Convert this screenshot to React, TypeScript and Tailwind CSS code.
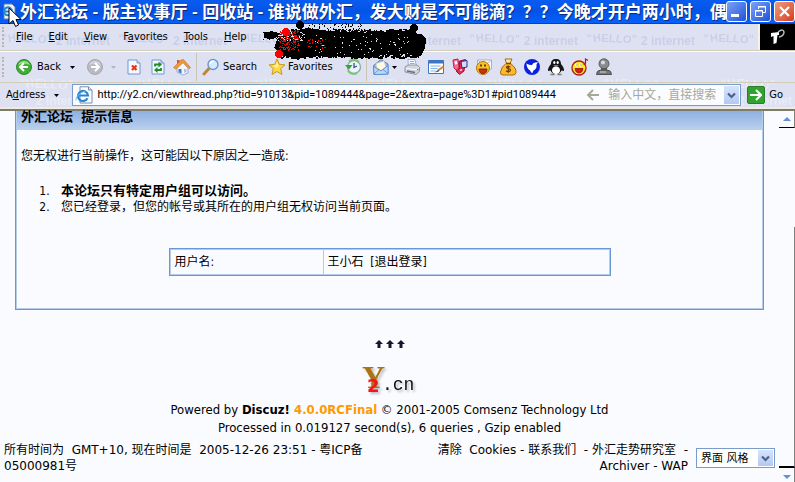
import type { ReactNode } from "react";

const menuItems = [
  { before: "", key: "F", after: "ile" },
  { before: "", key: "E", after: "dit" },
  { before: "", key: "V", after: "iew" },
  { before: "F", key: "a", after: "vorites" },
  { before: "", key: "T", after: "ools" },
  { before: "", key: "H", after: "elp" },
];

/* ---------- Icons ---------- */

function Icon({ children }: { children: ReactNode }) {
  return (
    <svg width="18" height="18" viewBox="0 0 18 18" className="shrink-0" aria-hidden="true">
      {children}
    </svg>
  );
}

function Caret({ muted = false }: { muted?: boolean }) {
  return (
    <svg width="5" height="3" viewBox="0 0 5 3" className="shrink-0" aria-hidden="true">
      <path d="M0 0h5L2.5 3z" fill={muted ? "#b4b6c4" : "#000"} />
    </svg>
  );
}

const BackIcon = () => (
  <Icon>
    <circle cx="9" cy="9" r="7.5" fill="#3fae35" stroke="#2d8a2a" />
    <path d="M3 7a6.5 6.5 0 0 1 12 0q-6-3-12 0z" fill="#9ada8b" />
    <path d="M13 9H5.5M9 5L5 9l4 4" fill="none" stroke="#fff" strokeWidth="2" />
  </Icon>
);

const ForwardIcon = () => (
  <Icon>
    <circle cx="9" cy="9" r="7.5" fill="#b9bac2" stroke="#a5a7b0" />
    <path d="M3 7a6.5 6.5 0 0 1 12 0q-6-3-12 0z" fill="#d4d5dc" />
    <path d="M5 9h7.5M9 5l4 4-4 4" fill="none" stroke="#fff" strokeWidth="2" />
  </Icon>
);

const StopIcon = () => (
  <Icon>
    <path d="M3 2h9l3 3v11H3z" fill="#f4f8ff" stroke="#6f97d6" />
    <path d="M12 2v3h3" fill="#cfe0fa" stroke="#6f97d6" />
    <path d="M7 7.5l4.5 4.5M11.5 7.5L7 12" stroke="#e2371c" strokeWidth="2.2" />
  </Icon>
);

const RefreshIcon = () => (
  <Icon>
    <path d="M3 2h9l3 3v11H3z" fill="#f4f8ff" stroke="#6f97d6" />
    <path d="M12 2v3h3" fill="#cfe0fa" stroke="#6f97d6" />
    <path d="M6 8.5v-2h4" fill="none" stroke="#1e8e2a" strokeWidth="1.8" />
    <path d="M9.5 3.5l3.5 3-3.5 3zM8.5 9L5 12l3.5 3z" fill="#1e8e2a" />
    <path d="M12 10v2H8" fill="none" stroke="#1e8e2a" strokeWidth="1.8" />
  </Icon>
);

const HomeIcon = () => (
  <Icon>
    <path d="M4 9l6-5 5 6v5l-5 2-6-3z" fill="#f3f5fc" stroke="#8c9cc4" strokeWidth=".8" />
    <path d="M4 2h2.5v5H4z" fill="#d5542f" />
    <path d="M.5 9.5L8 2l2.5-.5 7 8-1.5 1.2-6-6-7 6.5z" fill="#ee9a37" stroke="#bd6f26" strokeWidth=".6" />
    <path d="M5.5 11h3v4.5l-3-1.2z" fill="#4479cc" />
    <path d="M11 11h2.5v3L11 15z" fill="#a9c3ef" />
  </Icon>
);

const SearchIcon = () => (
  <Icon>
    <path d="M2 16l5-5.5" stroke="#c5872e" strokeWidth="3" strokeLinecap="round" />
    <circle cx="11" cy="6.5" r="5" fill="#d2ebff" stroke="#6d96cf" strokeWidth="1.4" />
    <path d="M8 6a3 3 0 0 1 4-2.5" fill="none" stroke="#fff" strokeWidth="1.6" />
  </Icon>
);

const StarIcon = () => (
  <Icon>
    <path d="M9 1l2.3 5.3 5.7.6-4.3 3.8 1.3 5.8-5-3-5 3 1.3-5.8L1 6.9l5.7-.6z" fill="#fcd949" stroke="#c99a1c" />
    <path d="M9 3.5l1.5 4L9 10 5 7.8l3-.5z" fill="#fff2a8" />
  </Icon>
);

const HistoryIcon = () => (
  <Icon>
    <circle cx="10" cy="9" r="6.5" fill="#e9f4fb" stroke="#8fae9e" strokeWidth="1.4" />
    <path d="M5 3.5a7 7 0 0 1 10 .5M4 13a7 7 0 0 0 9 2" fill="none" stroke="#7fc277" strokeWidth="2" />
    <path d="M1 7h7.5L5 11.5z" fill="#36a234" />
    <path d="M10 5v4.5L13 8" fill="none" stroke="#31538c" strokeWidth="1.3" />
  </Icon>
);

const MailIcon = () => (
  <Icon>
    <path d="M1.5 7.5L9 1.5 16 6v10l-14 .5z" fill="#8ab8ee" stroke="#5787c9" />
    <path d="M4 5.5L12 3l2 6-5 3.5-4.5-3z" fill="#fff9e6" stroke="#d8c795" strokeWidth=".8" />
    <path d="M1.5 8.5L9 13l7-5.5V16l-14 .5z" fill="#b8dafa" stroke="#5787c9" strokeWidth=".8" />
    <path d="M2 16l5-4.5M16 15.5l-5-4" stroke="#5787c9" strokeWidth=".8" />
  </Icon>
);

const PrintIcon = () => (
  <Icon>
    <path d="M5 1.5h7l1.5 7h-8z" fill="#f6faff" stroke="#7aa5d8" strokeWidth=".8" />
    <path d="M7 3.5h4M7 5.5h4.5" stroke="#87b1e2" />
    <path d="M2 9l3-2h9l2.5 2v4.5l-3.5 3L2 14z" fill="#d3d5dc" stroke="#8b8e9a" strokeWidth=".9" />
    <path d="M3 10.5l10 1 3-2" fill="none" stroke="#fff" />
    <path d="M4 13l8 1.5" stroke="#686e80" strokeWidth="1.4" />
    <path d="M14 11.5h1.5" stroke="#5aa84e" strokeWidth="1.5" />
  </Icon>
);

const EditIcon = () => (
  <Icon>
    <path d="M1.5 2.5h15v13h-15z" fill="#fff" stroke="#3d76c2" />
    <path d="M1.5 2.5h15v3h-15z" fill="#3d76c2" />
    <path d="M3.5 8h10M3.5 10.5h7M3.5 13h5" stroke="#86b3e8" />
    <path d="M16.5 8.5l-5.5 4" stroke="#d9822b" strokeWidth="2" />
    <path d="M11.5 11.5l-4 3 4.5-1z" fill="#2e5dab" />
  </Icon>
);

const PhoneIcon = () => (
  <Icon>
    <path d="M2 2l5-1 1 9-3 2-2-2z" fill="#f07098" stroke="#c31c46" />
    <path d="M3.5 3.5L6 3l.5 3-2.5.5z" fill="#fff" />
    <path d="M8.5 3l6-1.5L13 13l-4.5 3.5L5 13l3.5-2z" fill="#e52b50" stroke="#a90f31" />
    <path d="M10 3.5l6-1V9l-5 1z" fill="#cfe0ff" stroke="#1d328f" />
    <path d="M9 12.5l2-1" stroke="#ffd1dc" strokeWidth="1.4" />
  </Icon>
);

const MessengerIcon = () => (
  <Icon>
    <path d="M2.5 2h14v9h-14z" fill="#fff" stroke="#9ba0ae" strokeWidth=".8" />
    <path d="M3 2.5l6.5 5 6.5-5" fill="none" stroke="#b3b6c2" />
    <circle cx="8" cy="10" r="6.5" fill="#fbc02a" stroke="#b37508" />
    <path d="M4 11h8q-.5 4.5-4 4.5T4 11z" fill="#d12f12" stroke="#5a1a02" strokeWidth=".8" />
    <path d="M6 6.5v2M10 6.5v2" stroke="#3f2400" strokeWidth="1.6" />
  </Icon>
);

const MoneyIcon = () => (
  <Icon>
    <path d="M6 1h7l-2 4.5H7.5z" fill="#ffe9a4" stroke="#a56f09" />
    <path d="M7 5.5h4.5q6 4.5 5.5 9-.5 2.5-3 2.5H4q-3 0-2.5-3 1-5.500 5.500-8.500z" fill="#ffb92e" stroke="#a56f09" />
    <path d="M7 5.5h5" stroke="#7d4a02" strokeWidth="1.6" />
    <path d="M11.5 9q-4-1.5-4 .5c0 1.5 4 .8 4 2.5s-3 2-4.5.8M9.3 7.5V15" fill="none" stroke="#6f3c00" strokeWidth="1.2" />
  </Icon>
);

const BirdIcon = () => (
  <Icon>
    <circle cx="9" cy="9" r="8" fill="#0a20e0" />
    <path d="M3.5 5.5Q7 7.5 9 7q1-3 4-2.5l2-.5-1.5 2.5q.5 4.5-3 6L9 15.5l-2-3q-3.5-2.5-3.5-7z" fill="#fff" />
  </Icon>
);

const PenguinIcon = () => (
  <Icon>
    <path d="M9 1c3.5 0 5 2 5 5 1.5 2 3.5 4.5 3 7l-2.5-.5Q13 16 9 16t-5.5-3.5L1 13c-.5-2.5 1.5-5 3-7 0-3 1.5-5 5-5z" fill="#161616" />
    <path d="M9 8.5c3 0 4 2 4 4S11 16 9 16s-4-1.5-4-3.5 1-4 4-4z" fill="#fff" />
    <ellipse cx="7.3" cy="4.5" rx="1.1" ry="1.5" fill="#fff" />
    <ellipse cx="10.7" cy="4.5" rx="1.1" ry="1.5" fill="#fff" />
    <path d="M6 7.3h6L9 8.6z" fill="#aaa" />
    <path d="M3.5 16.5h4M10.5 16.5h4" stroke="#777" strokeWidth="1.6" />
  </Icon>
);

const SmileIcon = () => (
  <Icon>
    <circle cx="8" cy="10" r="7" fill="#ffe81a" stroke="#a81a20" strokeWidth="1.3" />
    <circle cx="5.5" cy="7" r="1.5" fill="#fff" />
    <circle cx="9.5" cy="7" r="1.5" fill="#fff" />
    <path d="M5.5 7h1M9.5 7h1" stroke="#333" />
    <path d="M4 10.5h8q-.5 4.5-4 4.5t-4-4.5z" fill="#d61b1b" stroke="#7e0909" strokeWidth=".7" />
    <path d="M14.5 6V1L17 2.5" fill="none" stroke="#a81a20" strokeWidth="1.2" />
    <circle cx="13.7" cy="6" r="1.3" fill="#d61b1b" />
  </Icon>
);

const PawnIcon = () => (
  <Icon>
    <path d="M1.5 16.5q0-4 4-4.5h7q4 .5 4 4.5z" fill="#777" stroke="#3b3b3b" strokeWidth=".8" />
    <path d="M6 9h6v4H6z" fill="#5b5b5b" />
    <circle cx="9" cy="5.8" r="5" fill="#8a8a8a" stroke="#4a4a4a" strokeWidth=".8" />
    <circle cx="8" cy="4.5" r="2" fill="#ddd" />
    <path d="M5 14h6" stroke="#c4c4c4" strokeWidth="1.2" />
  </Icon>
);

const PageIcon = () => (
  <Icon>
    <path d="M5 .8h8.5L17 4v13H5z" fill="#fff" stroke="#6c7fa6" strokeWidth=".9" />
    <path d="M13.5.8V4H17" fill="#d7e1f5" stroke="#6c7fa6" strokeWidth=".9" />
    <path d="M12.5 12.2a5 5 0 1 1 .5-2.7H4" fill="none" stroke="#2585d3" strokeWidth="2.2" />
    <path d="M1 14.5Q0 9 11 4.5" fill="none" stroke="#7ec0f2" />
  </Icon>
);

function ArrowLeft() {
  return (
    <svg width="14" height="12" viewBox="0 0 14 12" className="shrink-0" aria-hidden="true">
      <path d="M13 6H2M7 1L2 6l5 5" fill="none" stroke="#a9a897" strokeWidth="2" />
    </svg>
  );
}

function Chevron() {
  return (
    <svg width="9" height="7" viewBox="0 0 9 7" aria-hidden="true">
      <path d="M1 1.5L4.5 5 8 1.5" fill="none" stroke="#4d6185" strokeWidth="2.2" />
    </svg>
  );
}

/* ---------- Decoration ---------- */

function Watermark({ id, tileHeight, color, children }: { id: string; tileHeight: number; color: string; children: ReactNode }) {
  return (
    <svg className="absolute inset-0 h-full w-full select-none" aria-hidden="true">
      <defs>
        <pattern id={id} width="117" height={tileHeight} patternUnits="userSpaceOnUse">
          <g fill={color} fontFamily="Liberation Sans" fontWeight="bold" fontSize="12">
            {children}
          </g>
        </pattern>
      </defs>
      <rect width="100%" height="100%" fill={`url(#${id})`} />
    </svg>
  );
}

// Ragged black ink with red spots, built once from a fixed seed
function buildInk() {
  let seed = 7;
  const rand = () => {
    seed = (seed * 16807) % 2147483647;
    return seed / 2147483647;
  };
  const dot = (x: number, y: number, s: number) => `M${Math.round(x)} ${Math.round(y)}h${s}v${s}h-${s}z`;
  let black = "";
  let red = "";
  let holes = "";
  for (let i = 0; i < 420; i++) black += dot(28 + rand() * 120, 9 + rand() * 5, 1 + Math.round(rand()));
  for (let i = 0; i < 420; i++) black += dot(18 + rand() * 140, 32 + rand() * 5, 1 + Math.round(rand()));
  for (let i = 0; i < 90; i++) black += dot(1 + rand() * 18, 12 + rand() * 7, 1);
  for (let i = 0; i < 60; i++) black += dot(40 + rand() * 60, 3 + rand() * 7, 1);
  for (let i = 0; i < 190; i++) red += dot(17 + rand() * 20, 10 + rand() * 20, 1);
  for (let i = 0; i < 35; i++) red += dot(44 + rand() * 20, 19 + rand() * 9, 1);
  for (let i = 0; i < 75; i++) holes += dot(52 + rand() * 95, 14 + rand() * 20, 1);
  for (let i = 0; i < 60; i++) holes += dot(16 + rand() * 26, 12 + rand() * 8, 1);
  return { black, red, holes };
}

const ink = buildInk();

function Ink() {
  return (
    <svg width="166" height="40" viewBox="0 0 166 40" shapeRendering="crispEdges" className="pointer-events-none absolute left-[262px] top-5 z-10" aria-hidden="true">
      <path d="M2 13l8-2 7 3-3 4-8 1-4-3z" />
      <path d="M15 20l5-4 15-5 10-3 30 4 14 2 24-2 33-1 6-5 4 1-2 6 8 3 1 12-4 8-7 2-4-4-40 2-10 2-30-2-28 1-4 3-7-3-9-1-8-8z" />
      <circle cx="38" cy="5" r="4" />
      <circle cx="41" cy="33" r="5" />
      <circle cx="152" cy="8" r="4" />
      <circle cx="157" cy="21" r="7" />
      <circle cx="155" cy="32" r="5" />
      <path d={ink.black} />
      <path d={ink.holes} fill="#dfe3e0" />
      <path d={ink.red} fill="#f00" />
      <circle cx="24" cy="12" r="4" fill="#f00" />
      <circle cx="17" cy="34" r="4" fill="#f00" />
    </svg>
  );
}

function Grip() {
  return <span className="h-5 w-0 shrink-0 border-l-2 border-dotted border-[#b9b6a9]" />;
}

/* ---------- Browser chrome ---------- */

function TitleBar() {
  return (
    <div className="flex h-6 items-center border-b border-[#0a3fc0] bg-linear-to-b from-[#0a5cf0] via-[#0453e6] to-[#0660fb]">
      <div className="relative w-5 shrink-0">
        <Icon>
          <path d="M4 1h8l3 3v12H4z" fill="#eef1fb" stroke="#6c7fa6" />
          <path d="M11 11a4 4 0 1 1 1-2.5H4" fill="none" stroke="#2585d3" strokeWidth="2" />
        </Icon>
        <svg width="14" height="22" viewBox="0 0 14 22" className="absolute left-2 top-1 z-10" aria-hidden="true">
          <path d="M1 1v16l4-3.5 2.5 6 3-1.5L8 12.5h5z" fill="#fff" stroke="#000" />
        </svg>
      </div>
      <h1 className="min-w-0 flex-1 overflow-hidden font-[Lato,'Noto_Sans_CJK_SC',sans-serif] text-[17px] leading-6 font-bold whitespace-nowrap text-white [text-shadow:1px_1px_0_#0a2a80]">
        外汇论坛 - 版主议事厅 - 回收站 - 谁说做外汇，发大财是不可能滴？？？今晚才开户两小时，偶i
      </h1>
      <div className="flex shrink-0 gap-[3px]">
        <button aria-label="Minimize" className="flex h-[21px] w-[21px] items-end rounded-[3px] border border-white bg-linear-to-br from-[#7ba2f5] to-[#2350d8] p-1">
          <span className="h-[3px] w-2 bg-white" />
        </button>
        <button aria-label="Restore" className="flex h-[21px] w-[21px] items-center justify-center rounded-[3px] border border-white bg-linear-to-br from-[#7ba2f5] to-[#2350d8]">
          <svg width="13" height="13" viewBox="0 0 13 13" fill="none" stroke="#fff" aria-hidden="true">
            <path d="M4.5 4V1.5h7v6H9" />
            <path d="M4 2h8" />
            <path d="M1.5 5.5h7v6h-7zM1 6h8" />
          </svg>
        </button>
        <button aria-label="Close" className="flex h-[21px] w-[21px] items-center justify-center rounded-[3px] border border-white bg-linear-to-br from-[#f19a7c] to-[#d5391a]">
          <svg width="13" height="13" viewBox="0 0 13 13" aria-hidden="true">
            <path d="M2 2l9 9M11 2l-9 9" stroke="#fff" strokeWidth="2.2" />
          </svg>
        </button>
      </div>
    </div>
  );
}

function MenuBar() {
  return (
    <div className="relative flex h-[27px] border-b border-[#d3cdb8]">
      <Watermark id="wm-menu" tileHeight={27} color="#c8cfe7">
        <text x="3" y="18" fontSize="11" rotate="-14 -8 0 4 8 12 8">“HELLO”</text>
        <text x="56" y="21">2 internet</text>
      </Watermark>
      <nav className="relative flex flex-1 items-center pl-[2px]">
        <Grip />
        <div className="flex items-center gap-4 pl-3">
          {menuItems.map((item) => (
            <button key={item.key} className="leading-4">
              {item.before}
              <span className="underline">{item.key}</span>
              {item.after}
            </button>
          ))}
        </div>
      </nav>
      <div className="relative flex w-[37px] items-center justify-center border-l-2 border-[#f5f2e2] bg-black">
        <svg width="16" height="16" viewBox="0 0 16 16" aria-hidden="true">
          <path d="M1 4l8-1v3H7.5l-1 8-3 1V7L1 8z" fill="#fff" />
          <path d="M8 3q5-4 6 0 0 4-5 5" fill="none" stroke="#b9b9b9" strokeWidth="1.5" />
        </svg>
      </div>
    </div>
  );
}

function ToolBar() {
  return (
    <div className="relative flex h-8 items-center border-t border-b border-t-white border-b-[#d3cdb8] pl-[2px]">
      <Grip />
      <div className="flex items-center pl-[11px]">
        <button className="flex items-center gap-1">
          <BackIcon />
          Back
        </button>
        <button aria-label="Back history" className="px-[9px]">
          <Caret />
        </button>
        <button aria-label="Forward" className="pl-[2px]">
          <ForwardIcon />
        </button>
        <button aria-label="Forward history" className="px-[7px]">
          <Caret muted />
        </button>
        <div className="flex items-center gap-[6px] pl-[2px]">
          <button aria-label="Stop"><StopIcon /></button>
          <button aria-label="Refresh"><RefreshIcon /></button>
          <button aria-label="Home"><HomeIcon /></button>
        </div>
      </div>
      <span className="ml-[5px] h-7 w-px bg-[#c9c5b5]" />
      <div className="flex items-center gap-[11px] pl-[5px]">
        <button className="flex items-center gap-[3px]">
          <SearchIcon />
          Search
        </button>
        <button className="flex items-center gap-[2px]">
          <StarIcon />
          Favorites
        </button>
        <button aria-label="History"><HistoryIcon /></button>
      </div>
      <span className="ml-1 h-7 w-px bg-[#c9c5b5]" />
      <button aria-label="Mail" className="flex items-center gap-[2px] pl-[5px]">
        <MailIcon />
        <Caret />
      </button>
      <div className="flex items-center gap-[6px] pl-[6px]">
        <button aria-label="Print"><PrintIcon /></button>
        <button aria-label="Edit page"><EditIcon /></button>
        <button aria-label="Mobile"><PhoneIcon /></button>
        <button aria-label="Messenger"><MessengerIcon /></button>
        <button aria-label="Finance"><MoneyIcon /></button>
        <button aria-label="Thunder"><BirdIcon /></button>
        <button aria-label="Chat"><PenguinIcon /></button>
        <button aria-label="Smileys"><SmileIcon /></button>
        <button aria-label="Community"><PawnIcon /></button>
      </div>
    </div>
  );
}

function AddressBar() {
  return (
    <div className="relative flex h-6 items-center gap-[6px] pl-[6px]">
      <label htmlFor="address" className="shrink-0">
        A<span className="underline">d</span>dress
      </label>
      <button aria-label="Address menu" className="px-[3px]">
        <Caret />
      </button>
      <div className="ml-1 flex h-[22px] min-w-0 flex-1 items-center gap-1 border border-[#7a9cc8] bg-[#fafcff] pr-px pl-[2px]">
        <PageIcon />
        <input
          id="address"
          className="min-w-0 flex-1 bg-transparent font-[Roboto,sans-serif] outline-none"
          defaultValue="http://y2.cn/viewthread.php?tid=91013&pid=1089444&page=2&extra=page%3D1#pid1089444"
        />
        <ArrowLeft />
        <span className="shrink-0 px-1 text-[12px] text-[#a9a897]">输入中文，直接搜索</span>
        <button aria-label="Address history" className="flex h-[18px] w-[15px] shrink-0 items-center justify-center bg-linear-to-b from-[#d7e3fc] to-[#b2c9f5]">
          <Chevron />
        </button>
      </div>
      <button className="flex shrink-0 items-center gap-1 pr-3">
        <span className="flex h-[18px] w-[18px] items-center justify-center rounded-[2px] border border-[#2c7c2c] bg-[#2fa32d]">
          <svg width="12" height="12" viewBox="0 0 12 12" aria-hidden="true">
            <path d="M0 6h10M6 1l5 5-5 5" fill="none" stroke="#fff" strokeWidth="2" />
          </svg>
        </span>
        Go
      </button>
    </div>
  );
}

/* ---------- Forum page ---------- */

function MessageBox() {
  return (
    <section className="mx-[15px] border border-t-0 border-[#6699d8]">
      <div className="border border-t-0 border-[#b4cbea] pb-8">
        <h2 className="h-[19px] bg-linear-to-b from-[#8fb0e2] to-[#bbd1ee] pl-1 text-[13px] leading-3 font-bold">外汇论坛&nbsp; 提示信息</h2>
        <div className="px-1 pt-[18px]">
          <p className="leading-4">您无权进行当前操作，这可能因以下原因之一造成:</p>
          <ol className="list-decimal pt-[19px] pl-8 leading-4">
            <li className="pl-2"><strong className="text-[13px]">本论坛只有特定用户组可以访问。</strong></li>
            <li className="pl-2">您已经登录，但您的帐号或其所在的用户组无权访问当前页面。</li>
          </ol>
        </div>
        <table className="mx-auto mt-[33px] w-[442px] max-w-full border-separate border-spacing-0 border border-[#6699d8]">
          <tbody>
            <tr>
              <th scope="row" className="w-[35%] border border-[#b4cbea] px-1 py-1 text-left leading-4 font-normal">用户名:</th>
              <td className="border border-l-0 border-[#b4cbea] px-1 py-1 leading-4">
                王小石&nbsp; [<a href="#logout">退出登录</a>]
              </td>
            </tr>
          </tbody>
        </table>
      </div>
    </section>
  );
}

function SiteLogo() {
  return (
    <svg width="56" height="34" viewBox="0 0 56 34" role="img" aria-label="Y2.cn" className="overflow-visible [filter:drop-shadow(2px_2px_1px_#b9bcc4)]">
      <text x="0" y="25" fill="#ab7312" fontFamily="Liberation Serif" fontWeight="bold" fontSize="32">Y</text>
      <text x="5" y="29" fill="#f01818" fontFamily="DejaVu Sans" fontWeight="bold" fontSize="18">2</text>
      <text x="20" y="27" fill="#111" fontFamily="Liberation Mono" fontSize="18">.cn</text>
    </svg>
  );
}

function Footer() {
  return (
    <footer className="text-center">
      <svg width="30" height="8" viewBox="0 0 30 8" className="mx-auto mt-[30px]" aria-hidden="true">
        <path d="M4 0l4 4H5.5v4h-3V4H0zM15 0l4 4h-2.5v4h-3V4H11zM26 0l4 4h-2.5v4h-3V4H22z" fill="#15152b" />
      </svg>
      <div className="mt-[15px] flex justify-center">
        <SiteLogo />
      </div>
      <div className="pt-1 text-[13px] leading-[18px]">
        <p>
          Powered by <a href="#discuz" className="font-bold">Discuz! <span className="text-[#ff9900]">4.0.0RCFinal</span></a>
          &nbsp;© 2001-2005 Comsenz Technology Ltd
        </p>
        <p>Processed in 0.019127 second(s), 6 queries , Gzip enabled</p>
      </div>
      <div className="flex items-start px-1 pt-[5px] font-['DejaVu_Sans','Noto_Sans_CJK_SC',sans-serif] leading-4">
        <p className="w-[48%] text-left">所有时间为&nbsp; GMT+10, 现在时间是&nbsp; 2005-12-26 23:51 - 粤ICP备05000981号</p>
        <p className="ml-auto w-[34%] text-right">
          <a href="#cookies">清除&nbsp; Cookies</a> - <a href="#contact">联系我们</a>&nbsp; - <a href="#institute">外汇走势研究室</a>&nbsp; - <a href="#archiver">Archiver</a> - <a href="#wap">WAP</a>
        </p>
        <div className="relative mt-[6px] ml-2 h-5 w-[79px] shrink-0 border border-[#7a9cc8] bg-white">
          <select aria-label="界面 风格" className="h-full w-full appearance-none bg-transparent pt-[2px] pl-1 text-[11px] leading-4 outline-none">
            <option>界面 风格</option>
          </select>
          <span className="pointer-events-none absolute top-px right-px flex h-4 w-[15px] items-center justify-center bg-linear-to-b from-[#d7e3fc] to-[#b2c9f5]">
            <Chevron />
          </span>
        </div>
      </div>
    </footer>
  );
}

function ScrollBar() {
  return (
    <div className="flex w-4 shrink-0 flex-col">
      <button aria-label="Scroll up" className="flex h-[17px] items-center justify-center border-r border-b border-r-[#808080] border-b-black">
        <svg width="8" height="4" viewBox="0 0 8 4" aria-hidden="true"><path d="M4 0l4 4H0z" fill="#5f92d8" /></svg>
      </button>
      <div className="flex flex-1 flex-col justify-end">
        <div className="h-[71%] border-r border-b-2 border-r-[#808080] border-b-black" />
      </div>
      <button aria-label="Scroll down" className="flex h-[14px] items-end justify-center border-r border-[#808080] pb-[3px]">
        <svg width="8" height="4" viewBox="0 0 8 4" aria-hidden="true"><path d="M0 0h8L4 4z" fill="#5f92d8" /></svg>
      </button>
    </div>
  );
}

export default function App() {
  return (
    <div className="relative flex min-h-screen flex-col bg-[#f9fbfe] font-['DejaVu_Sans_Condensed','Noto_Sans_CJK_SC',sans-serif] text-[12px] text-black">
      <header className="bg-[#dee1f2] text-[11px]">
        <TitleBar />
        <MenuBar />
        <Ink />
        <div className="relative">
          <Watermark id="wm-tools" tileHeight={60} color="#e9ebf7">
            <text x="20" y="37" rotate="-14 -8 0 4 8 12 8">“HELLO”</text>
            <text x="36" y="54">2 internet</text>
          </Watermark>
          <ToolBar />
          <AddressBar />
        </div>
        <div className="h-1 border-t-2 border-b-2 border-t-[#efecdc] border-b-[#7d7a6e]" />
      </header>
      <div className="flex flex-1">
        <main className="min-w-0 flex-1">
          <MessageBox />
          <Footer />
        </main>
        <ScrollBar />
      </div>
    </div>
  );
}
